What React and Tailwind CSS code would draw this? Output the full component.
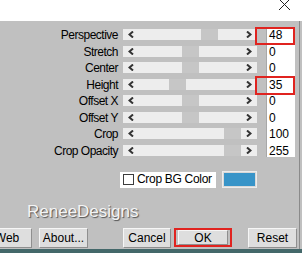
import React from "react"

const rows = [
  { label: "Perspective", value: "48", thumb: 78 },
  { label: "Stretch", value: "0", thumb: 59 },
  { label: "Center", value: "0", thumb: 59 },
  { label: "Height", value: "35", thumb: 46 },
  { label: "Offset X", value: "0", thumb: 59 },
  { label: "Offset Y", value: "0", thumb: 59 },
  { label: "Crop", value: "100", thumb: 101 },
  { label: "Crop Opacity", value: "255", thumb: 101 },
]

function Chevron({ dir }) {
  const pts = dir === "left" ? "5,0.5 1.5,3.5 5,6.5" : "1,0.5 4.5,3.5 1,6.5"
  return (
    <svg width="6" height="7" viewBox="0 0 6 7" className="block">
      <polyline points={pts} fill="none" stroke="#333" strokeWidth="2" />
    </svg>
  )
}

function Button({ children, className = "" }) {
  return (
    <div
      className={
        "h-[20px] shrink-0 flex items-center justify-center bg-[#dedede] border border-t-[#f6f6f6] border-l-[#f6f6f6] border-r-[#8f8f8f] border-b-[#8f8f8f] text-[12px] text-black " +
        className
      }
    >
      {children}
    </div>
  )
}

export default function App() {
  return (
    <div
      className="relative w-[302px] h-[253px] overflow-hidden bg-[#c0c0c0] flex flex-col"
      style={{ fontFamily: '"Liberation Sans", Arial, sans-serif' }}
    >
      {/* title strip */}
      <div className="h-[21px] bg-white shrink-0 relative">
        <svg width="13" height="12" viewBox="0 0 13 12" className="absolute left-[278px] top-[-1px]">
          <path d="M1 0 L12 11 M12 0 L1 11" stroke="#222" strokeWidth="1" />
        </svg>
      </div>

      {/* sliders */}
      <div className="pt-[7px] flex flex-col">
        {rows.map((r, i) => (
          <div key={r.label} className="flex items-start h-[16.5px]">
            <div className="w-[118px] text-right text-[12px] leading-[15px] tracking-[-0.5px] text-black">
              {r.label}
            </div>
            <div className="ml-[5px] mt-[1px] w-[134px] h-[11px] bg-[#ededed] relative flex items-center justify-between px-[5px]">
              <Chevron dir="left" />
              <Chevron dir="right" />
              <div
                className="absolute top-0 h-[11px] w-[17px] bg-[#c6c6c6]"
                style={{ left: r.thumb }}
              />
            </div>
            <div
              className={
                "ml-[9px] w-[29px] bg-white border-l border-[#a8a8a8] pl-[2px] text-[12px] leading-[15px] text-black " +
                (i === rows.length - 1 ? "h-[13px]" : "h-full")
              }
            >
              {r.value}
            </div>
          </div>
        ))}
      </div>

      {/* crop bg color */}
      <div className="mt-[11px] flex items-center h-[17px]">
        <div className="ml-[120px] w-[96px] h-[16px] bg-white flex items-center">
          <div className="ml-[3px] w-[11px] h-[11px] bg-white border border-[#3c3c3c]" />
          <span className="ml-[3px] text-[12px] leading-[15px] tracking-[-0.3px] text-black">Crop BG Color</span>
        </div>
        <div className="ml-[6px] w-[35px] h-[17px] border border-[#ececec] p-[1px] bg-[#d8d8d8]">
          <div className="w-full h-full bg-[#3894c8]" />
        </div>
      </div>

      {/* watermark */}
      <div className="mt-[14px] h-[20px] pl-[27px] text-[17px] leading-[20px] text-[#f4f4f4] [text-shadow:1px_1px_1px_#505050]">
        ReneeDesigns
      </div>

      {/* buttons */}
      <div className="mt-[5px] flex items-center h-[21px] ml-[-18px]">
        <Button className="w-[50px]">Web</Button>
        <Button className="ml-[7px] w-[49px]">About...</Button>
        <Button className="ml-[35px] w-[48px]">Cancel</Button>
        <div className="ml-[3px] w-[58px] h-[19px] border-2 border-[#e0231f] flex items-center justify-center">
          <Button className="w-[50px] !h-[15px]">OK</Button>
        </div>
        <Button className="ml-[16px] w-[49px]">Reset</Button>
      </div>

      <div className="mt-auto h-[4px] bg-[#44686a]" />

      {/* window edge */}
      <div className="absolute left-[299px] top-[21px] bottom-[4px] w-[1px] bg-[#8a8a8a]" />

      {/* red highlight boxes */}
      <div className="absolute left-[255px] top-[27px] w-[40px] h-[18px] border-2 border-[#e0231f]" />
      <div className="absolute left-[255px] top-[76px] w-[40px] h-[19px] border-2 border-[#e0231f]" />
    </div>
  )
}
